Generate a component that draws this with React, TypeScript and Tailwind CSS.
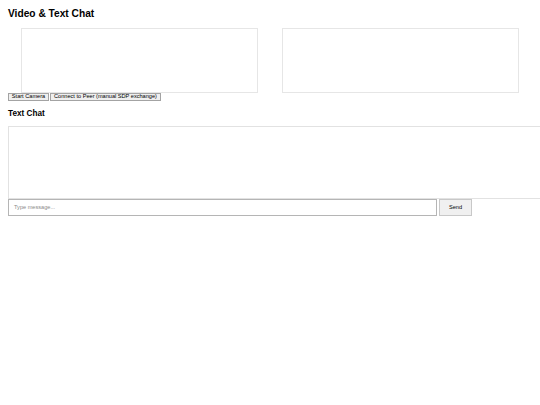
import React from "react";

export default function App() {
  return (
    <div
      className="w-[540px] h-[405px] overflow-hidden bg-white p-[8px] text-black"
      style={{ fontFamily: '"Liberation Sans", Arial, sans-serif' }}
    >
      <h1 className="text-[10.2px] font-bold leading-[12px]">Video &amp; Text Chat</h1>
      <div className="mt-[8px] flex gap-[24px] pl-[13px]">
        <div className="h-[65px] w-[237px] shrink-0 border border-[#e6e6e6] bg-white" />
        <div className="h-[65px] w-[237px] shrink-0 border border-[#e6e6e6] bg-white" />
      </div>
      <div className="flex gap-[1px]">
        <button className="flex h-[8px] w-[41px] items-center justify-center border border-[#a3a3a3] bg-[#efefef] text-[5.6px] leading-none text-black">
          Start Camera
        </button>
        <button className="flex h-[8px] w-[111px] items-center justify-center border border-[#a3a3a3] bg-[#efefef] text-[5.6px] leading-none text-black">
          Connect to Peer (manual SDP exchange)
        </button>
      </div>
      <h3 className="mt-[8px] text-[8.2px] font-bold leading-[10px]">Text Chat</h3>
      <div className="mt-[7px] h-[73px] w-[600px] border border-[#e2e2e2] bg-white" />
      <div className="flex gap-[2px]">
        <div className="flex h-[17px] w-[429px] items-center border border-[#b5b5b5] bg-white pl-[5px] text-[5.6px] text-[#8a8a8a]">
          Type message...
        </div>
        <button className="flex h-[17px] w-[33px] items-center justify-center border border-[#c8c8c8] bg-[#f0f0f0] text-[5.6px] text-black">
          Send
        </button>
      </div>
    </div>
  );
}
